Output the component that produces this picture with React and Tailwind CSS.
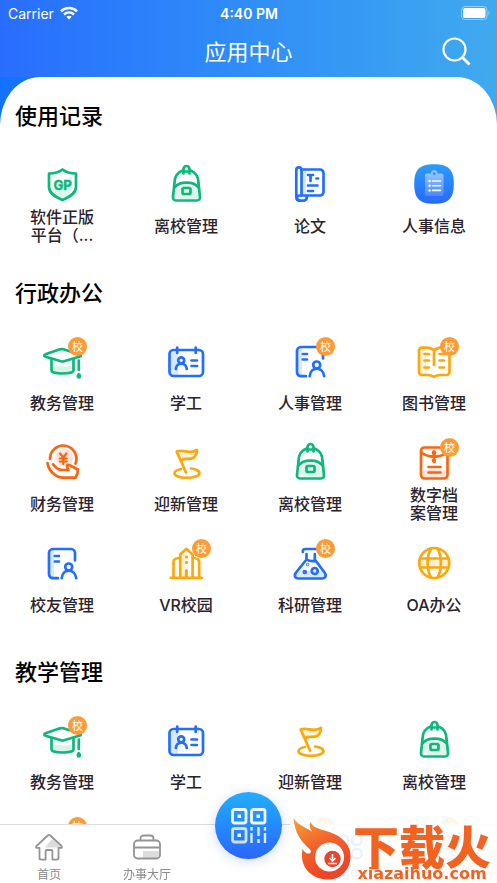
import { clsx } from 'clsx';

const GREEN = '#0cb87a';
const BLUE = '#216eff';
const YELLOW = '#fca80c';
const ORANGE = '#fb6410';

function Glyph({ color, children }) {
  return (
    <svg
      viewBox="0 0 40 40"
      className="size-10"
      fill="none"
      stroke={color}
      strokeWidth="2.7"
      strokeLinecap="round"
      strokeLinejoin="round"
      aria-hidden="true"
    >
      {children}
    </svg>
  );
}

function ShieldIcon() {
  return (
    <Glyph color={GREEN}>
      <path d="M30 12v12c0 5-4 8-9 10-5-1-9-4-11-8z" fill="#dff5ec" stroke="none" />
      <path d="M20.5 5.5c3.5 2.8 8 4 13.5 4V23c0 6-5.5 9.5-13.5 13C12.5 32.5 7 29 7 23V9.5c5.5 0 10-1.2 13.5-4z" />
      <text x="20.5" y="25.5" textAnchor="middle" fontSize="13" fontWeight="700" fontFamily="Inter, sans-serif" fill={GREEN} stroke={GREEN} strokeWidth="0.5">
        GP
      </text>
    </Glyph>
  );
}

function BackpackIcon() {
  return (
    <Glyph color={GREEN}>
      <path d="M9 27c5-7 19-7 24 0v8H13z" fill="#dff5ec" stroke="none" />
      <path d="M16.5 6.5C11 8.5 8.5 13 8.5 19L7 33c-.2 2 1 3.500 3 3.500h21c2 0 3.200-1.500 3-3.500l-1.500-14c0-6-2.500-10.500-8-12.500" />
      <path d="M17.5 9.500V5a3 3 0 0 1 6 0v4.500M8.500 23.500c5-6.500 19-6.500 24 0" />
      <path d="M18 7.500h5" />
      <rect x="16.5" y="24" width="8" height="6" rx="1.5" />
    </Glyph>
  );
}

function PaperIcon() {
  return (
    <Glyph color={BLUE}>
      <path d="M11 6h5v26h-5z" fill="#dbe8ff" stroke="none" />
      <path d="M11.5 5.500H30a3.500 3.500 0 0 1 3.500 3.500v19a3.500 3.500 0 0 1-3.500 3.500H11.500" />
      <path d="M11.5 31.500V6a2.600 2.600 0 0 0-5.200 0v26.500M11.500 31.500h-2a2.600 2.600 0 0 0 0 5.200H13c2.500 0 4-2 4-4.700" />
      <path d="M6.3 32.500c0 2.200 1.200 3.700 3 4" />
      <path d="M18 11h5M20.500 11.500V17M26.500 14.500h1.500M18 21.500h9.500M18 27h5" />
    </Glyph>
  );
}

function ClipboardIcon() {
  return (
    <svg viewBox="0 0 40 40" className="size-10" aria-hidden="true">
      <defs>
        <linearGradient id="clip-bg" x1="0" y1="0" x2="0" y2="1">
          <stop offset="0" stopColor="#2a9dfc" />
          <stop offset="1" stopColor="#2869fd" />
        </linearGradient>
        <linearGradient id="clip-board" x1="0" y1="0" x2="0" y2="1">
          <stop offset="0" stopColor="#9dccfe" />
          <stop offset="1" stopColor="#4b86fd" />
        </linearGradient>
      </defs>
      <path d="M20 .2C34.500 .2 39.800 5.500 39.800 20S34.500 39.800 20 39.800.2 34.500.2 20 5.500.2 20 .2z" fill="url(#clip-bg)" />
      <path d="M13 9.500h4a3.200 3.200 0 0 1 6.400 0h4.200a2 2 0 0 1 2 2V30a2 2 0 0 1-2 2H13a2 2 0 0 1-2-2V11.500a2 2 0 0 1 2-2z" fill="url(#clip-board)" />
      <circle cx="20.2" cy="9.5" r="1.5" fill="#3d94fc" />
      <path d="M18.500 17h8M18.500 21.700h8M18.500 26.400h8" stroke="#eef6ff" strokeWidth="1.6" strokeLinecap="round" />
      <path d="M15.500 17h.1M15.500 21.700h.1M15.500 26.400h.1" stroke="#fff" strokeWidth="2.4" strokeLinecap="round" />
    </svg>
  );
}

function CapIcon() {
  return (
    <Glyph color={GREEN}>
      <path d="M10 25c6-2 10 3 21-1v7c-5 3-16 3-21 0z" fill="#d8f3e8" stroke="none" />
      <path d="M20.500 8 38 13.500c1 .4 1 1.600 0 2L22 20.300c-1 .3-2 .3-3 0L3.500 15.800c-1.600-.5-1.600-2 0-2.600L18 8.300z" />
      <path d="M9.500 18.500v11c0 4 22 4 22 0v-11M36.800 19.500V29" />
      <path d="M36.800 33.200c1.600 2 1 3.300 0 3.300s-1.600-1.300 0-3.300z" />
    </Glyph>
  );
}

function IdCardIcon() {
  return (
    <Glyph color={BLUE}>
      <path d="M5 11h7v23H5z" fill="#dbe8ff" stroke="none" />
      <rect x="3.5" y="9" width="33.5" height="26" rx="4" />
      <path d="M11.200 6.500V12M29.700 6.500V12M25.500 19.500h5.500M25.500 25h5.500" />
      <circle cx="15.2" cy="19.3" r="3" />
      <path d="M9.800 28c1-7 10-7 11 0" />
    </Glyph>
  );
}

function PersonDocIcon() {
  return (
    <Glyph color={BLUE}>
      <path d="M7 7h5v28H7z" fill="#dbe8ff" stroke="none" />
      <path d="M16 35.200h-5A4 4 0 0 1 7 31V10a4 4 0 0 1 4-4h18a4 4 0 0 1 4 4v7.500M12.800 13H17M12.800 18.500H17" />
      <circle cx="26.7" cy="24" r="3.5" />
      <path d="M19.700 35.200c1-10 13-10 14.500 0" />
    </Glyph>
  );
}

function BookIcon() {
  return (
    <Glyph color={YELLOW}>
      <path d="M6 8h6v26H6z" fill="#fff1d3" stroke="none" />
      <path d="M20 9.500C18 7.500 15.500 6.600 13 6.600H8a3 3 0 0 0-3 3V31a3 3 0 0 0 3 3h6c2.500 0 4 .6 6 1.800 2-1.200 3.500-1.800 6-1.800h6.500a3 3 0 0 0 3-3V9.600a3 3 0 0 0-3-3H27c-2.500 0-5 .9-7 2.900zV24" />
      <path d="M10.500 13h4.500M10.500 19.500h4.500M10.500 26.500h4.500M25.500 13h4.500M25.500 19.500h4.500M25.500 26.500h4.500" />
    </Glyph>
  );
}

function MoneyIcon() {
  return (
    <Glyph color={ORANGE}>
      <circle cx="22" cy="15.5" r="9" fill="#fde6d9" stroke="none" />
      <path d="M8 17A13.200 13.200 0 1 1 33.500 21.500" />
      <path d="m18 11.500 3.200 4 3.200-4M17.800 16.500h7M17.800 19.500h7M21.200 16v6" strokeWidth="2.2" />
      <path d="M5.500 21c.5 5 4 9.500 8.500 12.700 2 1.400 4 2 6.500 2h13c1.500-2.500 2.500-5 2.500-8.200l-8.500-4.300c-2-1-3 .5-2.300 2l1.300 2.800h-6c-3.500 0-6.500-2-9.500-5.700" />
    </Glyph>
  );
}

function FlagIcon() {
  return (
    <Glyph color={YELLOW}>
      <path d="m12 11 3 7c5-2 9 0 14-3l1-4c-8 1-11 0-18 0z" fill="#fff1d3" stroke="none" />
      <path d="M20 30.500 10.700 9.600c7-3 12.500 3.500 20.300-1.800 0 4-1.500 6.500-3.500 8-5 2.500-8-.5-12.300 2.200" />
      <path d="M15 27c-4 .8-6.500 2.300-6.500 4.200 0 2.700 5.500 4.600 12.300 4.600s12.700-1.900 12.700-4.600c0-2.200-3.500-4.200-8.500-4.700" />
    </Glyph>
  );
}

function ArchiveIcon() {
  return (
    <Glyph color={ORANGE}>
      <path d="M9 28h22v8H9z" fill="#fde6d9" stroke="none" />
      <rect x="7" y="5.5" width="26.5" height="31" rx="3.5" />
      <path d="M7.500 10.500c7 5.500 18.500 5.500 25.500 0M20 10v8.500M14.500 25h12M14.500 30.500h12" />
      <circle cx="20" cy="10.7" r="1" />
      <circle cx="20" cy="19" r=".8" />
    </Glyph>
  );
}

function BuildingIcon() {
  return (
    <Glyph color={YELLOW}>
      <path d="M15 11h5v23h-5z" fill="#fff1d3" stroke="none" />
      <path d="M4.800 34.800h31M7.500 34.500V19c0-2 1.500-3.500 5-4M33.200 34.500V19c0-2-1.500-3.500-5-4M14.200 34.500V11.500l6.200-5.700 6.200 5.700v23" />
      <path d="M20.300 14h.4M20.300 19.500h.4M20.400 27.500V34" strokeWidth="3" />
    </Glyph>
  );
}

function FlaskIcon() {
  return (
    <Glyph color={BLUE}>
      <path d="M8 28h24l2 5-3 2H9l-3-2z" fill="#dbe8ff" stroke="none" />
      <path d="M12.800 9v-.5a2.500 2.500 0 0 1 2.500-2.500H28M16.500 11v5.500L6 29.500c-2.500 3.500-.5 6 2.500 6h23.500c3 0 5-2.500 2.500-6L24.800 16.500V11M16.500 16.500c3 2.300 6 1.800 9 1.500" />
      <circle cx="24.7" cy="28" r="3" />
      <circle cx="14.8" cy="29" r="1" />
      <circle cx="17.7" cy="21.500" r=".4" />
    </Glyph>
  );
}

function GlobeIcon() {
  return (
    <Glyph color={YELLOW}>
      <path d="M6 17h29v7H6z" fill="#fff1d3" stroke="none" />
      <circle cx="20.2" cy="20" r="15" />
      <path d="M17 5.500c-4.500 8-4.500 21 0 29M23.500 5.500c4.500 8 4.500 21 0 29M6.500 15.500h27.500M6.500 24.500h27.500" />
    </Glyph>
  );
}

const apps = {
  software: { name: '软件正版平台（...', icon: ShieldIcon },
  leave: { name: '离校管理', icon: BackpackIcon },
  paper: { name: '论文', icon: PaperIcon },
  hrInfo: { name: '人事信息', icon: ClipboardIcon },
  academic: { name: '教务管理', icon: CapIcon, badge: true },
  student: { name: '学工', icon: IdCardIcon },
  hr: { name: '人事管理', icon: PersonDocIcon, badge: true },
  library: { name: '图书管理', icon: BookIcon, badge: true },
  finance: { name: '财务管理', icon: MoneyIcon },
  welcome: { name: '迎新管理', icon: FlagIcon },
  archive: { name: '数字档案管理', icon: ArchiveIcon, badge: true },
  alumni: { name: '校友管理', icon: PersonDocIcon },
  vr: { name: 'VR校园', icon: BuildingIcon, badge: true },
  research: { name: '科研管理', icon: FlaskIcon, badge: true },
  oa: { name: 'OA办公', icon: GlobeIcon },
};

const sections = [
  { title: '使用记录', items: ['software', 'leave', 'paper', 'hrInfo'] },
  {
    title: '行政办公',
    items: [
      'academic', 'student', 'hr', 'library',
      'finance', 'welcome', 'leave', 'archive',
      'alumni', 'vr', 'research', 'oa',
    ],
  },
  {
    title: '教学管理',
    items: ['academic', 'student', 'welcome', 'leave', 'research', 'alumni', 'hr', 'library'],
  },
];

function AppTile({ app }) {
  const Icon = app.icon;

  return (
    <button type="button" className="flex flex-col items-center gap-1 pt-2.5 pb-3">
      <span className="relative">
        <Icon />
        {app.badge && (
          <span className="absolute -top-1 left-[26px] flex size-[19px] items-center justify-center rounded-full bg-[#ff9b35] text-[11px] leading-none text-white">
            校
          </span>
        )}
      </span>
      <span className="flex h-[35px] w-16 items-center justify-center text-center font-[Inter,'Noto_Sans_CJK_SC',sans-serif] text-[16px] leading-[18px] font-medium text-balance text-[#2b232d]">
        {app.name}
      </span>
    </button>
  );
}

function StatusBar() {
  return (
    <div className="grid h-[26px] grid-cols-3 items-center pr-[7px] pl-2 font-[Inter,'Liberation_Sans',sans-serif] text-[14px]">
      <div className="flex items-center gap-1.5">
        <span>Carrier</span>
        <svg viewBox="0 0 18 14" className="h-3.5 w-[18px]" fill="none" stroke="currentColor" strokeWidth="2.6" aria-hidden="true">
          <path d="M1 5.200c4.500-4.300 11.500-4.300 16 0M4 8.500c3-2.700 7-2.700 10 0" />
          <path d="M9 13.500 6.300 10.800c1.600-1.400 3.800-1.400 5.400 0z" fill="currentColor" stroke="none" />
        </svg>
      </div>
      <span className="text-center font-semibold">4:40 PM</span>
      <svg viewBox="0 0 29 14" className="h-3.5 w-[29px] justify-self-end" aria-hidden="true">
        <rect x=".5" y=".5" width="25.5" height="13" rx="3.5" fill="none" stroke="#fff" strokeOpacity=".45" />
        <rect x="2" y="2" width="22.5" height="10" rx="2" fill="#fff" />
        <path d="M27.500 4.800c1.200.6 1.200 3.800 0 4.400z" fill="#fff" fillOpacity=".5" />
      </svg>
    </div>
  );
}

function HomeIcon() {
  return (
    <svg viewBox="0 0 28 28" className="size-7" fill="none" stroke="#949494" strokeWidth="1.8" strokeLinejoin="round" aria-hidden="true">
      <path d="M17 6 26 14.500H10z" fill="#dcdcdc" stroke="none" />
      <path d="M12.700 2.500 1.500 13c-.8.900-.4 1.900.8 1.900h2.200V25c0 1 .6 1.600 1.600 1.600h4.500V18a1 1 0 0 1 1-1h4.800a1 1 0 0 1 1 1v8.600h4.500c1 0 1.600-.6 1.600-1.600V14.900h2.200c1.200 0 1.600-1 .8-1.900L15.300 2.500c-.9-.8-1.700-.8-2.600 0z" />
    </svg>
  );
}

function BriefcaseIcon() {
  return (
    <svg viewBox="0 0 28 28" className="size-7" fill="none" stroke="#949494" strokeWidth="1.8" strokeLinejoin="round" aria-hidden="true">
      <path d="M10 18h16v7H10z" fill="#dcdcdc" stroke="none" />
      <rect x="1" y="7.5" width="26" height="18" rx="3.5" />
      <path d="M7.500 7.500V5.500a3 3 0 0 1 3-3h7a3 3 0 0 1 3 3v2M1 14.500h26" />
    </svg>
  );
}

function AppsIcon() {
  return (
    <svg viewBox="0 0 28 28" className="size-7" fill="none" stroke="#216eff" strokeWidth="2.2" aria-hidden="true">
      <rect x="2.5" y="2.5" width="9.5" height="9.5" rx="4" />
      <rect x="16" y="2.5" width="9.5" height="9.5" rx="4" />
      <rect x="2.5" y="16" width="9.5" height="9.5" rx="4" />
      <rect x="16" y="16" width="9.5" height="9.5" rx="4" />
    </svg>
  );
}

function UserIcon() {
  return (
    <svg viewBox="0 0 28 28" className="size-7" fill="none" stroke="#949494" strokeWidth="1.8" aria-hidden="true">
      <circle cx="14" cy="8.5" r="5.5" />
      <path d="M3.500 26c0-14 21-14 21 0z" />
    </svg>
  );
}

function QrIcon() {
  return (
    <svg viewBox="0 0 36 36" className="size-9" fill="none" stroke="#f2f8ff" strokeWidth="2.8" aria-hidden="true">
      <rect x="1.5" y="1.5" width="13.5" height="13.5" rx="2" />
      <rect x="20.5" y="1.5" width="13.5" height="13.5" rx="2" />
      <rect x="1.5" y="20.5" width="13.5" height="13.5" rx="2" stroke="#cfe3ff" />
      <path d="M6.500 8.200H10M25.500 8.200H29M6.500 27.200H10" strokeWidth="3.5" />
      <path d="M20.500 19v3.500M20.500 25v10M27.500 19v9M27.500 31v4M34 19v3.500M34 25v10" stroke="#dcebff" strokeWidth="2.4" />
    </svg>
  );
}

function Tab({ icon, label, active = false }) {
  return (
    <button
      type="button"
      className={clsx(
        'flex flex-1 flex-col items-center gap-1 pt-2 text-[12px] leading-[18px]',
        active ? 'text-[#216eff]' : 'text-[#8c8c8c]'
      )}
    >
      {icon}
      <span>{label}</span>
    </button>
  );
}

function SiteMark() {
  return (
    <div className="pointer-events-none absolute right-0 bottom-0 flex h-[71px] items-end bg-white/90 pr-1.5 pl-[3px]">
      <svg viewBox="0 0 60 66" className="h-[66px] w-[60px] shrink-0" aria-hidden="true">
        <defs>
          <linearGradient id="flame" x1="0" y1="0" x2=".4" y2="1">
            <stop offset="0" stopColor="#f9a136" />
            <stop offset=".5" stopColor="#f2642b" />
            <stop offset="1" stopColor="#ec4527" />
          </linearGradient>
        </defs>
        <path
          d="M.5 1C4 7 11 10 19 14.500 16.500 11 16 8 17.500 5c2 4.500 6.500 6.500 14 8.500C45 17 57 25 57.500 38 58 52 48 62.500 35.500 62.500 20 62.500 8.500 52 9 38c0-3 .3-5 .5-6.500 1 3 3.500 5.500 6.500 5 2.500-.5 2.500-2.500.5-4.500C8 24 2 17 .5 1z"
          fill="url(#flame)"
        />
        <circle cx="36.5" cy="40" r="14.5" fill="#fff" />
        <circle cx="39.5" cy="42" r="8.2" fill="#e8432b" />
        <path d="M39.500 37v5.500M36.500 41l3 3 3-3M35 46.500h9" fill="none" stroke="#fff" strokeWidth="1.6" />
      </svg>
      <div className="flex flex-col items-center pb-px text-[#f26322]">
        <span className="text-[46px] leading-[44px] font-black">下载火</span>
        <span className="font-['DejaVu_Sans',sans-serif] text-[16px] leading-4 font-bold">xiazaihuo.com</span>
      </div>
    </div>
  );
}

export default function App() {
  return (
    <div className="flex h-screen flex-col bg-white font-['Noto_Sans_CJK_SC',sans-serif]">
      <header className="bg-linear-to-r from-[#296dff] to-[#40aaee] text-white">
        <StatusBar />
        <div className="grid grid-cols-[1fr_auto_1fr] items-start pt-2 pb-[11px]">
          <h1 className="col-start-2 text-[22px] leading-8 font-normal">应用中心</h1>
          <button type="button" aria-label="搜索" className="justify-self-end pt-[3px] pr-[26px]">
            <svg viewBox="0 0 29 29" className="size-[29px]" fill="none" stroke="currentColor" strokeWidth="2.2" aria-hidden="true">
              <circle cx="12.5" cy="12.5" r="11" />
              <path d="m20 20 7.500 7.500" strokeWidth="2.8" />
            </svg>
          </button>
        </div>
      </header>

      <div className="min-h-0 flex-1 bg-linear-to-r from-[#1371ff] to-[#40aaee]">
        <main className="h-full overflow-y-auto rounded-[40px_40px_0_0/48px_48px_0_0] bg-white pt-px [scrollbar-width:none]">
          {sections.map((section) => (
            <section key={section.title}>
              <h2 className="px-[15px] pt-5 pb-6 text-[22px] leading-8 font-medium text-black">
                {section.title}
              </h2>
              <div className="grid grid-cols-4 pr-px">
                {section.items.map((id) => (
                  <AppTile key={id} app={apps[id]} />
                ))}
              </div>
            </section>
          ))}
        </main>
      </div>

      <nav className="relative flex h-[59px] border-t border-[#dcdcdc] bg-white">
        <Tab icon={<HomeIcon />} label="首页" />
        <Tab icon={<BriefcaseIcon />} label="办事大厅" />
        <div className="flex w-[105px] justify-center">
          <button
            type="button"
            aria-label="扫一扫"
            className="-mt-[33px] flex size-[67px] shrink-0 items-center justify-center rounded-full bg-linear-to-b from-[#25adfc] to-[#2b64fb] shadow-[0_2px_12px_rgba(60,110,250,0.25)]"
          >
            <QrIcon />
          </button>
        </div>
        <Tab icon={<AppsIcon />} label="应用中心" active />
        <Tab icon={<UserIcon />} label="我的" />
        <SiteMark />
      </nav>
    </div>
  );
}
